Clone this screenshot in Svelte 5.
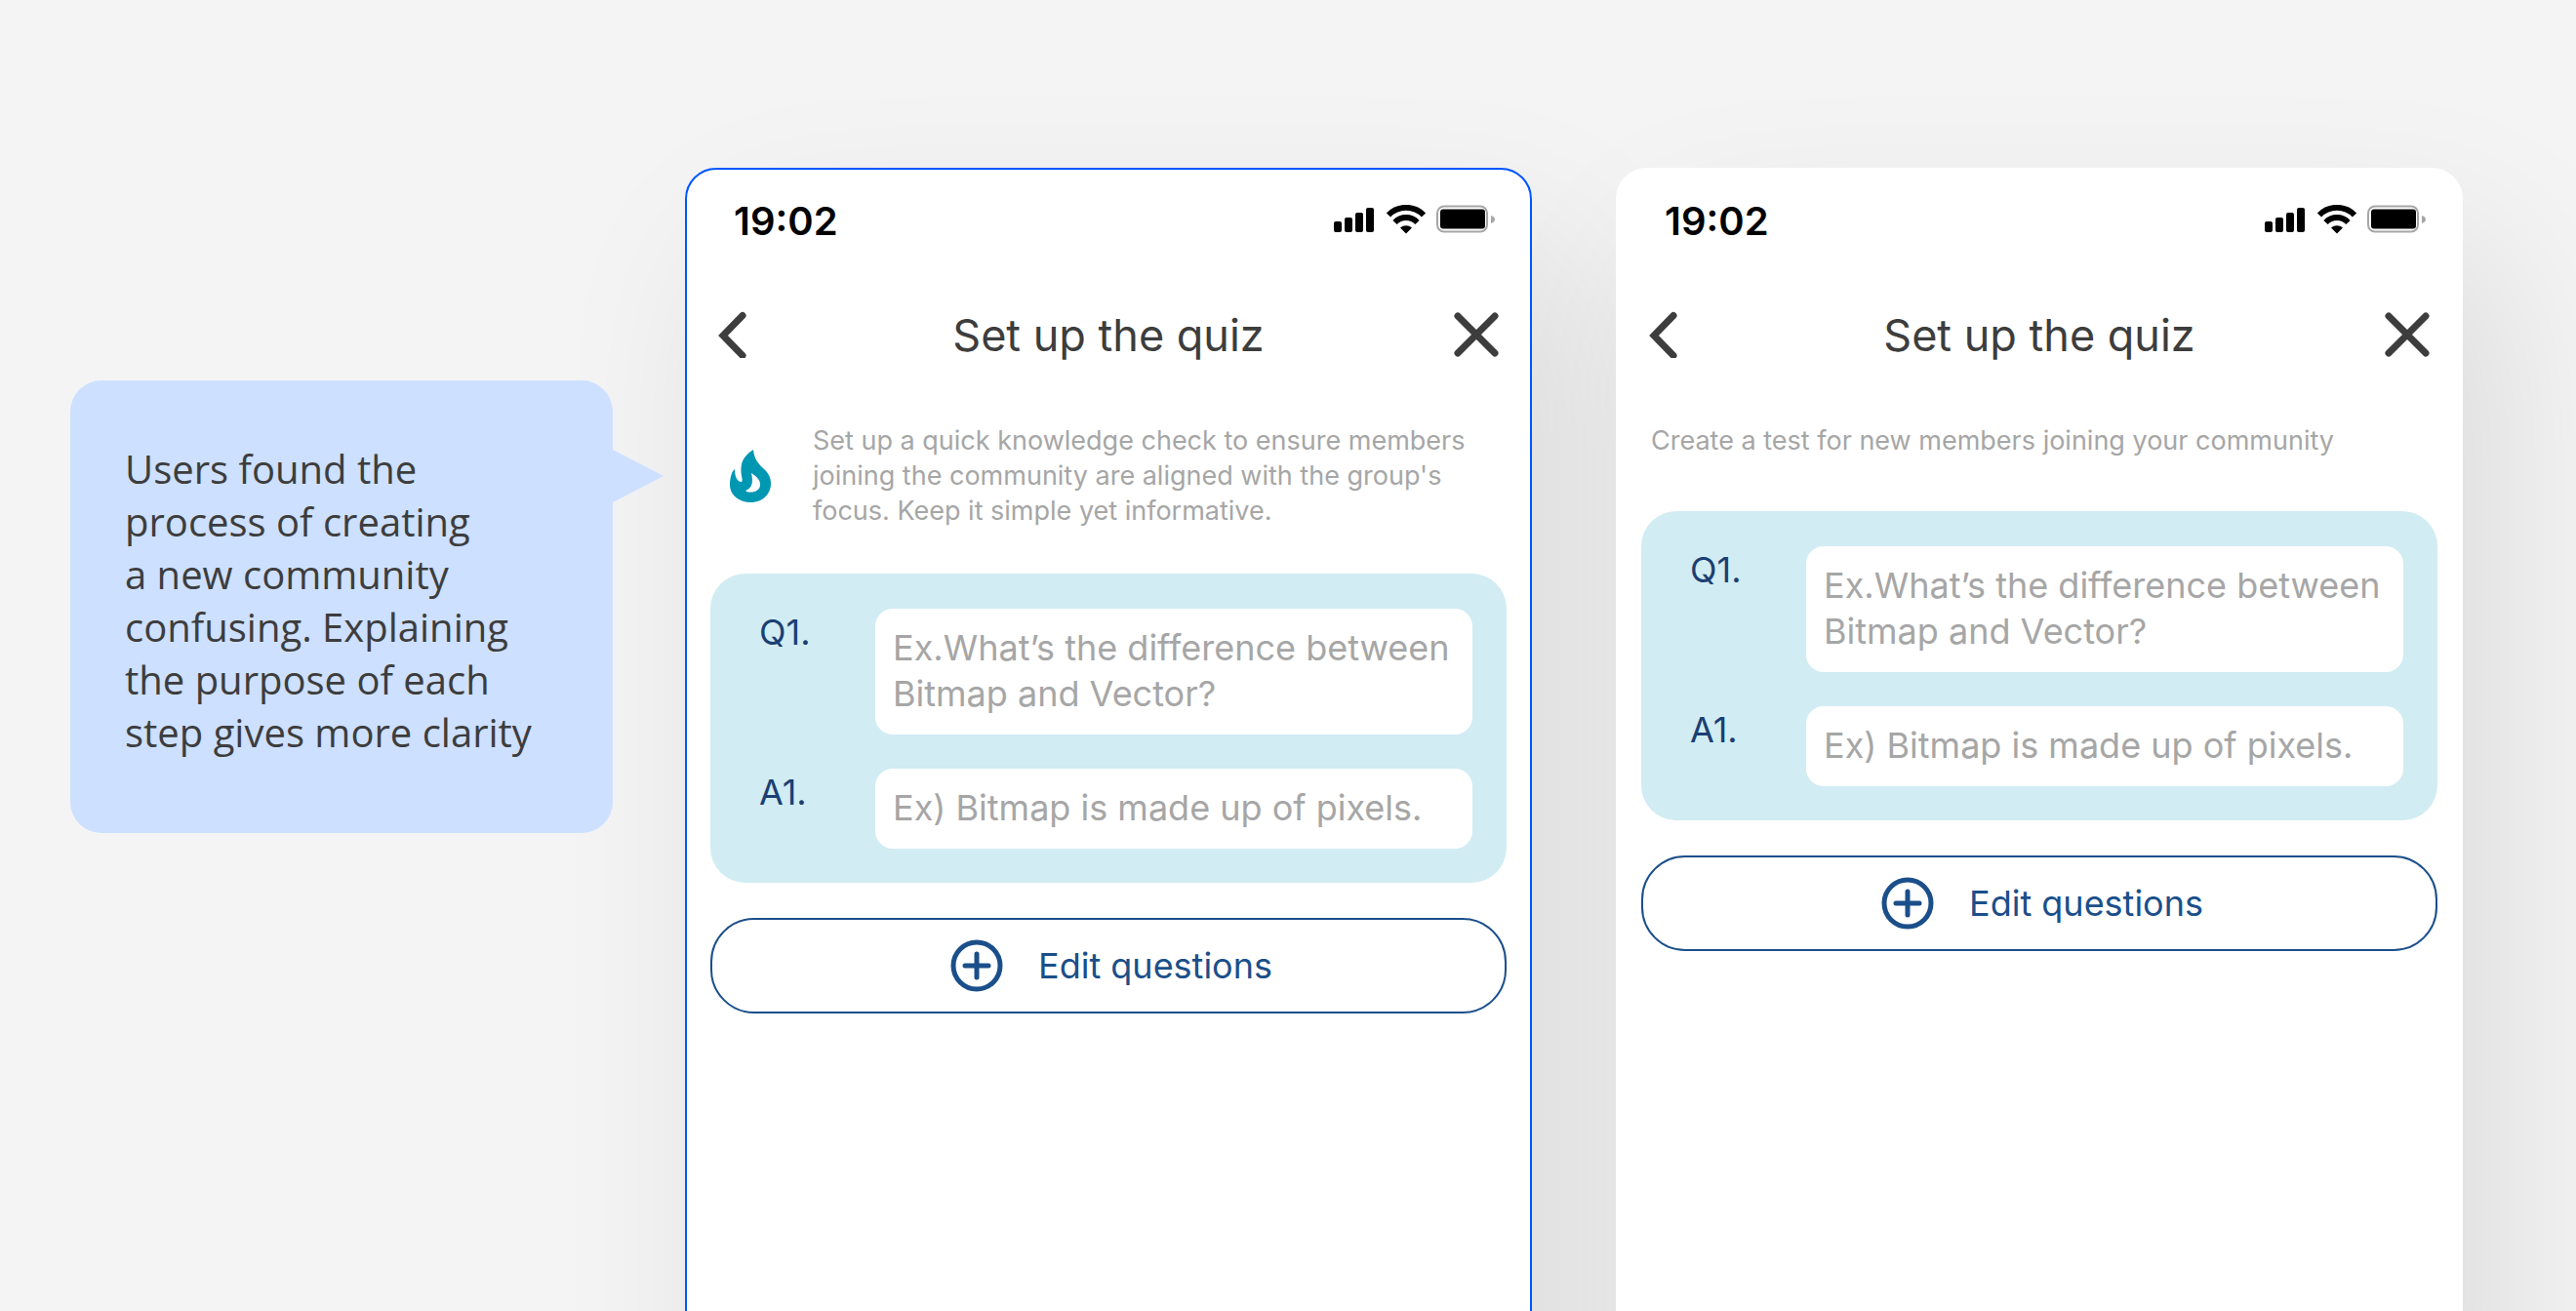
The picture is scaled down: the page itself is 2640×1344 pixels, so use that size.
<script lang="ts">
  interface Screen {
    id: string;
    hint: string;
    detailed: boolean;
  }

  const screens: Screen[] = [
    {
      id: 'after',
      hint: "Set up a quick knowledge check to ensure members joining the community are aligned with the group's focus. Keep it simple yet informative.",
      detailed: true,
    },
    {
      id: 'before',
      hint: 'Create a test for new members joining your community',
      detailed: false,
    },
  ];
</script>

<main class="board">
  <aside class="bubble">
    <p>
      Users found the<br />
      process of creating<br />
      a new community<br />
      confusing. Explaining<br />
      the purpose of each<br />
      step gives more clarity
    </p>
  </aside>

  {#each screens as screen (screen.id)}
    <section class="phone" class:active={screen.detailed}>
      <div class="status">
        <span class="time">19:02</span>
        <svg class="status-icons" viewBox="0 0 168 32" aria-hidden="true">
          <!-- signal -->
          <rect x="1" y="17" width="8" height="11" rx="2" />
          <rect x="12" y="13" width="8" height="15" rx="2" />
          <rect x="23" y="8" width="8" height="20" rx="2" />
          <rect x="34" y="3" width="8" height="25" rx="2" />
          <!-- wifi -->
          <g fill="none" stroke="#000" stroke-width="6">
            <path d="M57 10.500a25 25 0 0 1 36 0" />
            <path d="M63.500 18a16 16 0 0 1 23 0" />
          </g>
          <path d="M69 23.500a9 9 0 0 1 12 0l-6 6z" />
          <!-- battery -->
          <rect x="107" y="1.500" width="51" height="26" rx="7" fill="#fff" stroke="#a6a6a6" stroke-width="2" />
          <rect x="110" y="4.500" width="46" height="20" rx="3" />
          <path d="M162 11v8c3-1 4-2.500 4-4s-1-3-4-4z" fill="#a6a6a6" />
        </svg>
      </div>

      <header class="bar">
        <button class="icon-button" aria-label="Back">
          <svg viewBox="0 0 48 48" class="stroke"><path d="M26 4.500 6 25l20 20.500" /></svg>
        </button>
        <h1>Set up the quiz</h1>
        <button class="icon-button" aria-label="Close">
          <svg viewBox="0 0 48 48" class="stroke"><path d="m5 5 38 38M43 5 5 43" /></svg>
        </button>
      </header>

      <div class="hint" class:with-icon={screen.detailed}>
        {#if screen.detailed}
          <svg class="flame" viewBox="0 0 42 54" aria-hidden="true">
            <path
              fill-rule="evenodd"
              d="M24 0C25 9 28 13 33 18C39 23 42 28 42 35C42 46 33 54 21 54C9 54 0 46 0 36C0 29 2 22 5 20C5 27 7 32 11 33C13 33 13 31 12 27C10 15 13 7 24 0ZM22 24C28 28 31 31 31 36C31 42 24 45 17 43C16 42 17 41 18 41C23 38 24 33 22 24Z"
            />
          </svg>
        {/if}
        <p>{screen.hint}</p>
      </div>

      <form class="card">
        <label for="q-{screen.id}">Q1.</label>
        <textarea
          id="q-{screen.id}"
          rows="2"
          placeholder="Ex.What’s the difference between Bitmap and Vector?"
        ></textarea>
        <label for="a-{screen.id}">A1.</label>
        <input id="a-{screen.id}" type="text" placeholder="Ex) Bitmap is made up of pixels." />
      </form>

      <button class="edit">
        <svg viewBox="0 0 54 54" aria-hidden="true">
          <circle cx="27" cy="27" r="24" />
          <path d="M27 15v24M15 27h24" />
        </svg>
        Edit questions
      </button>
    </section>
  {/each}
</main>

<style>
  :global(body) {
    background: #f4f4f4;
  }

  .board {
    position: relative;
    z-index: 0;
    box-sizing: border-box;
    display: grid;
    grid-template-columns: 556fr 942fr 954fr;
    height: 100vh;
    padding: 172px 116px 0 72px;
    overflow: hidden;
    font-family: Inter, 'Liberation Sans', sans-serif;
  }

  .bubble {
    position: relative;
    align-self: start;
    margin: 218px 0 0;
    padding: 64px 20px 76px 56px;
    border-radius: 32px;
    background: #cde0ff;
    color: #3d3d3d;
    font: 40px/54px 'Open Sans', sans-serif;
  }

  .bubble::after {
    content: '';
    position: absolute;
    top: 71px;
    left: 100%;
    width: 52px;
    height: 54px;
    background: inherit;
    clip-path: polygon(0 0, 100% 50%, 0 100%);
  }

  p {
    margin: 0;
  }

  .phone {
    position: relative;
    box-sizing: border-box;
    min-height: 1300px;
    margin-left: 86px;
    padding: 0 24px;
    border: 2px solid #fff;
    border-radius: 32px;
    background: #fff;
  }

  /* shadow sits behind every phone, so neighbours stay clean */
  .phone::before {
    content: '';
    position: absolute;
    inset: 0;
    z-index: -1;
    border-radius: 32px;
    box-shadow: 40px 80px 180px rgba(0, 0, 0, 0.1);
  }

  .phone.active {
    margin-left: 74px;
    border-color: #05f;
  }

  .status {
    display: flex;
    align-items: center;
    justify-content: space-between;
    height: 104px;
    padding: 0 10px 0 24px;
  }

  .time {
    font-size: 40px;
    font-weight: 600;
  }

  .status-icons {
    width: 168px;
    height: 32px;
  }

  .bar {
    display: flex;
    align-items: center;
    justify-content: space-between;
    height: 130px;
    padding: 0 7px;
    color: #3d3d3d;
  }

  h1 {
    margin: 0;
    font-size: 45px;
    font-weight: 400;
  }

  .icon-button {
    padding: 0;
    border: 0;
    background: none;
    color: inherit;
  }

  .icon-button svg {
    display: block;
    width: 48px;
    height: 48px;
  }

  .stroke {
    fill: none;
    stroke: currentColor;
    stroke-width: 7;
    stroke-linecap: round;
  }

  .hint {
    display: flex;
    align-items: center;
    gap: 43px;
    padding: 26px 10px 54px;
    color: #a6a6a6;
    font-size: 27px;
    line-height: 36px;
  }

  .hint.with-icon {
    padding: 26px 36px 46px 20px;
  }

  .flame {
    flex: none;
    width: 42px;
    height: 54px;
    fill: #0097b2;
  }

  .card {
    display: grid;
    grid-template-columns: 119px 1fr;
    gap: 35px 0;
    padding: 36px 35px 35px 50px;
    border-radius: 36px;
    background: #d1ecf2;
    color: #1b3f73;
    font-size: 36px;
    line-height: 47px;
  }

  label {
    padding-top: 1px;
  }

  textarea,
  input {
    box-sizing: border-box;
    width: 100%;
    margin: 0;
    padding: 17px 18px 18px;
    border: 0;
    border-radius: 18px;
    background: #fff;
    font: inherit;
    resize: none;
    overflow: hidden;
  }

  ::placeholder {
    color: #a6a6a6;
    opacity: 1;
  }

  .edit {
    box-sizing: border-box;
    display: flex;
    align-items: center;
    justify-content: center;
    gap: 36px;
    width: 100%;
    height: 98px;
    margin-top: 36px;
    padding: 0 0 0 6px;
    border: 2px solid #1b4f8a;
    border-radius: 45px;
    background: #fff;
    color: #1b4f8a;
    font: 36px/48px Inter, sans-serif;
  }

  .edit svg {
    width: 54px;
    height: 54px;
    fill: none;
    stroke: currentColor;
    stroke-width: 5;
    stroke-linecap: round;
  }
</style>
